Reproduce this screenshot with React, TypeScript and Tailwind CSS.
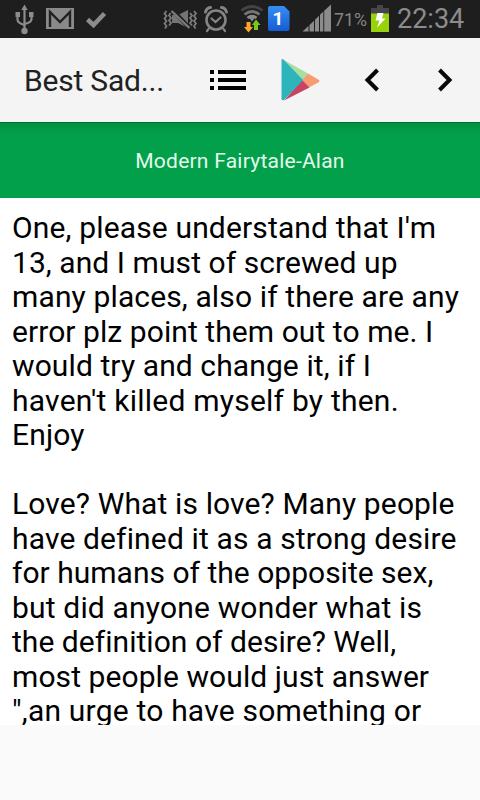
import React from 'react';

interface StoryLine {
  text: string;
  spacing: number;
}

const storyLines: StoryLine[] = [
  { text: "One, please understand that I'm", spacing: 0.15 },
  { text: '13, and I must of screwed up', spacing: 0.07 },
  { text: 'many places, also if there are any', spacing: 0.13 },
  { text: 'error plz point them out to me. I', spacing: 0.07 },
  { text: 'would try and change it, if I', spacing: 0.1 },
  { text: "haven't killed myself by then.", spacing: 0.23 },
  { text: 'Enjoy', spacing: 0.15 },
  { text: '', spacing: 0 },
  { text: 'Love? What is love? Many people', spacing: 0.13 },
  { text: 'have defined it as a strong desire', spacing: 0.14 },
  { text: 'for humans of the opposite sex,', spacing: 0.01 },
  { text: 'but did anyone wonder what is', spacing: 0.17 },
  { text: 'the definition of desire? Well,', spacing: 0.04 },
  { text: 'most people would just answer', spacing: 0.08 },
  { text: '",an urge to have something or', spacing: 0.2 },
];

const StatusIcons: React.FC = () => (
  <svg width="396" height="38" viewBox="0 0 396 38" className="block shrink-0">
    {/* usb */}
    <g stroke="#8c8c8c" fill="none" strokeWidth="2.2">
      <path d="M24.5 8v23M17.5 15v4.5q0 3.5 7 5.5M31.5 14v5q0 3.5-7 5" />
      <path d="M24.5 4.500l3.200 5.500h-6.400z" fill="#8c8c8c" stroke="none" />
      <path d="M15.500 12h4.500v5h-4.500zM29 12h4.500v5H29z" fill="#8c8c8c" stroke="none" />
      <circle cx="24.500" cy="31" r="3.200" fill="#8c8c8c" stroke="none" />
    </g>
    {/* mail */}
    <path d="M46 8h28v21H46z" fill="#8a8a8a" />
    <path d="M50 27V12l10 10 10-10v15" fill="none" stroke="#222" strokeWidth="2.400" />
    {/* check */}
    <path d="M87.500 19.500l6 5.500 11-11.500" fill="none" stroke="#8c8c8c" strokeWidth="4.500" />
    {/* muted, vibrating */}
    <g fill="none" stroke="#7d7d7d" strokeWidth="1.800">
      <path d="M166.500 11l-2 2.500 2 2.500-2 2.500 2 2.500-2 2.500 2 2.500-1.500 2.500M170.500 13l-1.500 2.500 2 2.500-2 2.500 2 2.500-2 2.500M194 11l2 2.500-2 2.500 2 2.500-2 2.500 2 2.500-2 2.500 1.500 2.500M190 13l2 2.500-2 2.500 2 2.500-2 2.500 2 2.500" />
      <path d="M172 15h6l10-5v18l-10-5h-6z" fill="#747474" stroke="none" />
      <path d="M172 9.500l18 19" stroke="#202020" strokeWidth="4" />
      <path d="M171.500 11l18 17" strokeWidth="2.200" />
    </g>
    {/* alarm */}
    <g fill="none" stroke="#858585" strokeLinecap="round">
      <circle cx="216" cy="20" r="9.500" strokeWidth="2.600" />
      <path d="M211.500 18.500l4 3.500 5-4.500M208.500 29l-1.500 2M223.500 29l1.500 2" strokeWidth="2.200" />
      <path d="M205.500 12q1-4 5-4.500M226.500 12q-1-4-5-4.500" strokeWidth="3" />
    </g>
    {/* wifi */}
    <g fill="none" strokeWidth="2.800">
      <path d="M241.500 10.500q10.500-8 21 0" stroke="#434343" />
      <path d="M244.500 14.500q7.500-6 15 0" stroke="#747474" />
      <path d="M247.500 18q4.500-3.500 9 0" stroke="#8c8c8c" />
    </g>
    <path d="M249 17.500h6l-3 4z" fill="#8c8c8c" />
    <path d="M246.500 22h4v5h2.500l-4.500 5.500-4.500-5.500h2.500z" fill="#fda72b" />
    <path d="M254 30v-5h-2l4-5.500 4.500 5.500h-2.500v5z" fill="#79c71a" />
    {/* sim card */}
    <defs>
      <linearGradient id="sim" x1="0" y1="0" x2="0" y2="1">
        <stop stopColor="#378df1" />
        <stop offset="1" stopColor="#155cd4" />
      </linearGradient>
    </defs>
    <path d="M270 6h14l5.500 5.500V29q0 2-2 2H270q-2 0-2-2V8q0-2 2-2z" fill="url(#sim)" />
    <text x="272.500" y="25" fill="#fff" fontFamily="Roboto" fontWeight="700" fontSize="19">1</text>
    {/* signal */}
    <g fill="#8b8b8b">
      <path d="M302.500 31.500l6-5.500v5.500zM309.500 25l4.500-4.300v10.800h-4.500zM315 19.700l4-3.900v15.700h-4zM320 14.800l3.300-3.200v19.900H320zM324.200 10.700l6.800-6.200v27h-6.800z" />
    </g>
    <text x="334" y="26" fill="#858585" fontFamily="Roboto" fontSize="18.500" textLength="33" lengthAdjust="spacingAndGlyphs">71%</text>
    {/* battery */}
    <path d="M377 5h6v3h6v6h-18V8h6z" fill="#45454a" />
    <path d="M371 13.500h18V32h-18z" fill="#97d20b" />
    <path d="M377.500 13h6l-1.500 5.500h3.500l-8.500 9 2.500-7h-4z" fill="#fff" />
  </svg>
);

const PlayLogo: React.FC = () => (
  <svg width="40" height="44" viewBox="0 0 40 44" className="block">
    <path d="M2 1.500L27 15.500 22 24z" fill="#a8dfa0" />
    <path d="M27 15.500l11 6.500q1 1 0 2l-10 5.500-7-7z" fill="#f79b72" />
    <path d="M21 22l7.500 7.500L3 42.500z" fill="#c94461" />
    <path d="M.5 2q0-1.500 2-.5L22 22 3 42q-2.500 1-2.500-1z" fill="#2eb5bc" />
  </svg>
);

interface ChevronProps {
  direction: 'left' | 'right';
}

const Chevron: React.FC<ChevronProps> = ({ direction }) => (
  <svg width="16" height="24" viewBox="0 0 16 24" className="block">
    <path
      d={direction === 'left' ? 'M13.500 2L3.500 12l10 10' : 'M2.500 2l10 10-10 10'}
      fill="none"
      stroke="#080808"
      strokeWidth="4"
    />
  </svg>
);

const App: React.FC = () => {
  return (
    <div className="flex h-[800px] w-[480px] flex-col overflow-hidden bg-[#fafafa] font-[Roboto,sans-serif]">
      <div className="flex h-[38px] shrink-0 bg-[#1e1e1e]">
        <StatusIcons />
        <span className="ml-[1px] whitespace-nowrap text-[27px] leading-[39px] text-[#8c8c8c]">22:34</span>
      </div>

      <header className="flex h-[84px] shrink-0 items-center bg-[#f4f4f4] pl-6">
        <h1 className="w-[186px] whitespace-nowrap text-[30px] font-normal tracking-[-0.200px] text-[#212121]">Best Sad...</h1>
        <svg width="36" height="20" viewBox="0 0 36 20" className="block" fill="#000">
          <path d="M0 0h4v4H0zM0 8h4v4H0zM0 16h4v4H0zM8 0h28v4H8zM8 8h28v4H8zM8 16h28v4H8z" />
        </svg>
        <div className="ml-[35px]">
          <PlayLogo />
        </div>
        <div className="ml-[43px]">
          <Chevron direction="left" />
        </div>
        <div className="ml-[57px]">
          <Chevron direction="right" />
        </div>
      </header>

      <div className="flex h-[76px] shrink-0 items-center justify-center border-t border-[#086b34] bg-linear-to-b from-[#00923f] to-[#03a04b] to-15% pt-[2px]">
        <h2 className="whitespace-nowrap text-[21px] font-normal tracking-[0.240px] text-[#e2fbea]">Modern Fairytale-Alan</h2>
      </div>

      <main className="h-[527px] shrink-0 overflow-hidden bg-white px-3 pt-[13px] text-[30px] leading-[34.500px] text-black">
        {storyLines.map((line, index) => (
          <p key={index} className="h-[34.500px] whitespace-nowrap" style={{ letterSpacing: `${line.spacing}px` }}>
            {line.text}
          </p>
        ))}
      </main>
    </div>
  );
};

export default App;
